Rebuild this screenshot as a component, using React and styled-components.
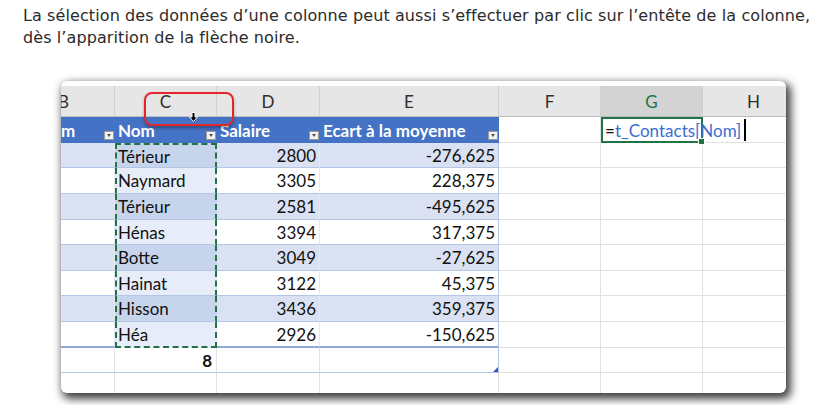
import styled, { createGlobalStyle } from 'styled-components';

const GlobalStyle = createGlobalStyle`
  body {
    margin: 0;
    background: #ffffff;
  }
`;

const Page = styled.div`
  padding: 5px 0 0 23px;
  width: 816px;
  height: 405px;
  box-sizing: border-box;
  overflow: hidden;
`;

const Text = styled.p`
  margin: 0;
  font-family: 'DejaVu Sans', sans-serif;
  font-size: 16px;
  letter-spacing: 0.1px;
  line-height: 22px;
  color: #2b2b2b;
  white-space: nowrap;
`;

const Window = styled.div`
  position: relative;
  margin: 32px 0 0 38px;
  width: 725px;
  height: 312px;
  padding-top: 5px;
  box-sizing: border-box;
  background: #ffffff;
  border-radius: 6px;
  box-shadow: 3px 4px 8px 2px rgba(0, 0, 0, 0.75);
  overflow: hidden;
`;

const Sheet = styled.div`
  display: grid;
  margin-left: -48px;
  grid-template-columns: 102px 102px 103px 179px 102px 102px 102px;
  grid-template-rows: 31px 26px 25px 26px 26px 25px 26px 25px 26px 26px 25px 26px;
  font-family: Lato, 'Liberation Sans', sans-serif;
  font-size: 17px;
  color: #111111;
`;

const ColHead = styled.div`
  display: flex;
  align-items: center;
  justify-content: center;
  background: ${({ $active }) => ($active ? '#d3d3d3' : '#e6e6e6')};
  color: ${({ $active }) => ($active ? '#217346' : '#2e2e2e')};
  border-right: 1px solid #d0d0d0;
  border-bottom: 1px solid #bdbdbd;
  box-sizing: border-box;
`;

const TableHead = styled.div`
  display: flex;
  justify-content: space-between;
  align-items: center;
  padding: 0 1px 0 3px;
  background: #4472c4;
  color: #ffffff;
  font-weight: 700;
  white-space: nowrap;
  box-sizing: border-box;
`;

const FilterBtn = styled.span`
  align-self: flex-end;
  margin-bottom: 3px;
  width: 10px;
  height: 9px;
  flex: none;
  box-sizing: border-box;
  background: #f3f3f3;
  border: 1px solid #9a9a9a;
  display: flex;
  align-items: center;
  justify-content: center;

  &::after {
    content: '';
    border-left: 2.5px solid transparent;
    border-right: 2.5px solid transparent;
    border-top: 3px solid #555555;
  }
`;

const BodyCell = styled.div`
  display: flex;
  align-items: center;
  justify-content: ${({ $num }) => ($num ? 'flex-end' : 'flex-start')};
  padding: 0 3px 0 1px;
  box-sizing: border-box;
  white-space: nowrap;
  background: ${({ $band, $sel }) =>
    $sel ? ($band ? '#c6d4ec' : '#e7edf8') : $band ? '#d9e1f2' : '#ffffff'};
  border-right: 1px solid ${({ $edge }) => ($edge ? '#b4c6e7' : '#e3e8f1')};
  border-bottom: ${({ $last }) => ($last ? '2px solid #8eaadb' : '1px solid #b4c6e7')};
  ${({ $sel, $first, $last }) =>
    $sel &&
    `
    border-left: 2px dashed #217346;
    border-right: 2px dashed #217346;
    ${$first ? 'border-top: 2px dashed #217346;' : ''}
    ${$last ? 'border-bottom: 2px dashed #217346;' : ''}
  `}
`;

const TotalCell = styled.div`
  position: relative;
  display: flex;
  align-items: center;
  justify-content: flex-end;
  padding: 0 4px;
  box-sizing: border-box;
  font-weight: 700;
  border-right: 1px solid ${({ $edge }) => ($edge ? '#b4c6e7' : '#e1e1e1')};
  border-bottom: 1px solid #b4c6e7;

  ${({ $edge }) =>
    $edge &&
    `
    &::after {
      content: '';
      position: absolute;
      right: 0;
      bottom: 0;
      border-left: 5px solid transparent;
      border-bottom: 5px solid #3b56b5;
    }
  `}
`;

const Blank = styled.div`
  box-sizing: border-box;
  border-right: 1px solid #e1e1e1;
  border-bottom: 1px solid #e1e1e1;
`;

const EditCell = styled.div`
  position: relative;
  display: flex;
  align-items: center;
  padding-left: 2px;
  box-sizing: border-box;
  border: 2px solid #217346;
  white-space: nowrap;
  color: #3a6fcf;
  font-size: 17px;
  z-index: 1;

  &::after {
    content: '';
    position: absolute;
    right: -4px;
    bottom: -4px;
    width: 5px;
    height: 5px;
    background: #217346;
    border: 1px solid #ffffff;
  }
`;

const Eq = styled.span`
  color: #111111;
`;

const Caret = styled.span`
  display: inline-block;
  flex: none;
  width: 1.5px;
  height: 22px;
  margin-left: 3px;
  background: #000000;
`;

const Callout = styled.div`
  position: absolute;
  left: 83px;
  top: 11px;
  width: 90px;
  height: 34px;
  box-sizing: border-box;
  border: 2px solid #e4262c;
  border-radius: 8px;
  box-shadow: 0 2px 3px rgba(0, 0, 0, 0.35);
  pointer-events: none;
`;

const Cursor = styled.svg`
  position: absolute;
  left: 128px;
  top: 31px;
`;

const names = ['Térieur', 'Naymard', 'Térieur', 'Hénas', 'Botte', 'Hainat', 'Hisson', 'Héa'];
const salaries = [2800, 3305, 2581, 3394, 3049, 3122, 3436, 2926];
const avg = salaries.reduce((a, b) => a + b, 0) / salaries.length;
const fmt = (n) => n.toFixed(3).replace('.', ',');

const letters = ['B', 'C', 'D', 'E', 'F', 'G', 'H'];

export default function App() {
  return (
    <>
      <GlobalStyle />
      <Page>
        <Text>
          La sélection des données d’une colonne peut aussi s’effectuer par clic sur l’entête de la colonne,
          <br />
          dès l’apparition de la flèche noire.
        </Text>
        <Window>
          <Sheet>
            {letters.map((l) => (
              <ColHead key={l} $active={l === 'G'}>
                {l}
              </ColHead>
            ))}

            <TableHead>
              Prénom
              <FilterBtn />
            </TableHead>
            <TableHead>
              Nom
              <FilterBtn />
            </TableHead>
            <TableHead>
              Salaire
              <FilterBtn />
            </TableHead>
            <TableHead>
              Ecart à la moyenne
              <FilterBtn />
            </TableHead>
            <Blank />
            <EditCell>
              <Eq>=</Eq>t_Contacts[Nom]
              <Caret />
            </EditCell>
            <Blank />

            {names.map((name, i) => {
              const band = i % 2 === 0;
              const first = i === 0;
              const last = i === names.length - 1;
              return [
                <BodyCell key={`b${i}`} $band={band} $last={last} />,
                <BodyCell key={`c${i}`} $band={band} $sel $first={first} $last={last}>
                  {name}
                </BodyCell>,
                <BodyCell key={`d${i}`} $band={band} $num $last={last}>
                  {salaries[i]}
                </BodyCell>,
                <BodyCell key={`e${i}`} $band={band} $num $edge $last={last}>
                  {fmt(salaries[i] - avg)}
                </BodyCell>,
                <Blank key={`f${i}`} />,
                <Blank key={`g${i}`} />,
                <Blank key={`h${i}`} />,
              ];
            })}

            <TotalCell />
            <TotalCell>{names.length}</TotalCell>
            <TotalCell />
            <TotalCell $edge />
            <Blank />
            <Blank />
            <Blank />

            {letters.map((l) => (
              <Blank key={`z${l}`} />
            ))}
          </Sheet>

          <Callout />
          <Cursor width="9" height="10" viewBox="0 0 9 10">
            <path d="M3 0.5h3v4.5h2.5L4.5 9.5L0.5 5H3z" fill="#000000" stroke="#ffffff" strokeWidth="1" />
          </Cursor>
        </Window>
      </Page>
    </>
  );
}
